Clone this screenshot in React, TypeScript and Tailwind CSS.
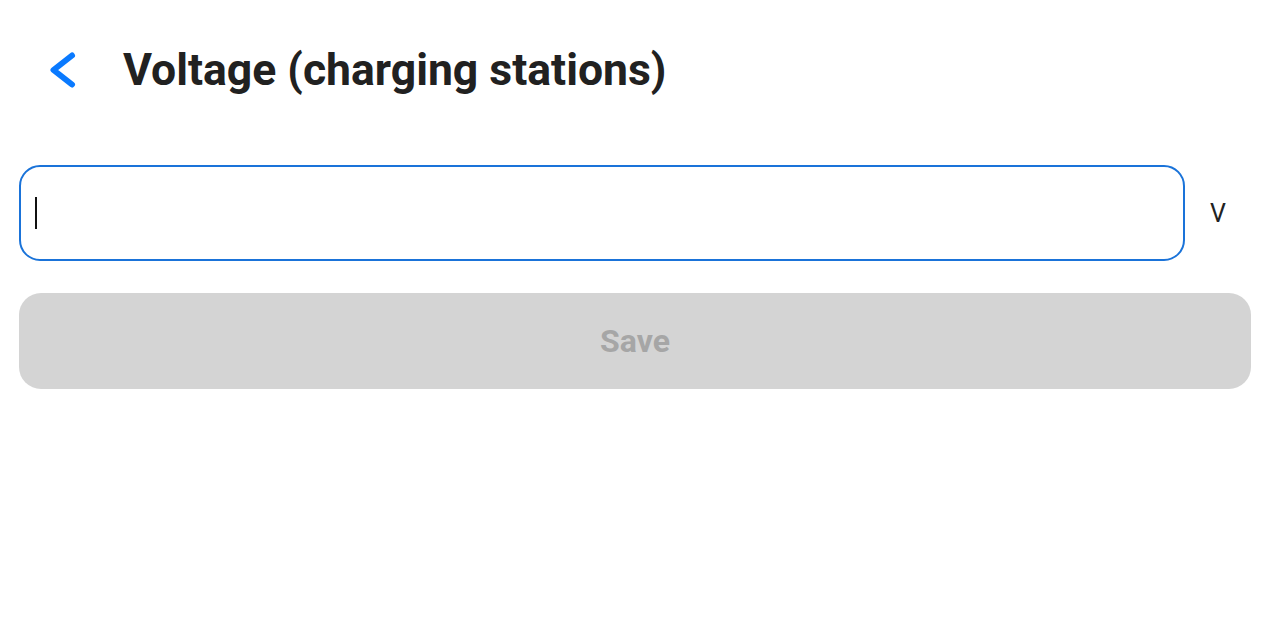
import { useState } from 'react';

function BackIcon() {
  return (
    <svg width="30" height="40" viewBox="0 0 30 40" fill="none">
      <path d="M24 5.5 L5.5 20 L24 34.5" stroke="#0a7aff" strokeWidth="6" strokeLinecap="round" strokeLinejoin="round" />
    </svg>
  );
}

export default function App() {
  const [value] = useState('');

  return (
    <div className="min-h-[633px] w-full bg-white font-['Roboto',sans-serif] text-[#212121]">
      {/* Header */}
      <div className="flex items-center h-[140px] pl-[48px]">
        <button className="flex items-center bg-transparent border-none p-0" aria-label="Back">
          <BackIcon />
        </button>
        <h1 className="ml-[45px] text-[44.5px] font-bold leading-none">Voltage (charging stations)</h1>
      </div>

      {/* Input row */}
      <div className="flex items-center pl-[19px] pt-[25px]">
        <div className="flex items-center w-[1166px] h-[96px] rounded-[21px] border-2 border-[#1a73d9] px-[14px]">
          {value ? <span className="text-[25px]">{value}</span> : null}
          <div className="w-[2px] h-[32px] bg-[#111]" />
        </div>
        <span className="ml-[25px] text-[25px] text-[#222] leading-none">V</span>
      </div>

      {/* Save */}
      <div className="pr-[17px] pt-[32px] pl-[19px]">
        <button
          disabled
          className="w-full h-[96px] rounded-[22px] bg-[#d4d4d4] text-[#a6a6a6] text-[32px] font-bold"
        >
          Save
        </button>
      </div>
    </div>
  );
}
